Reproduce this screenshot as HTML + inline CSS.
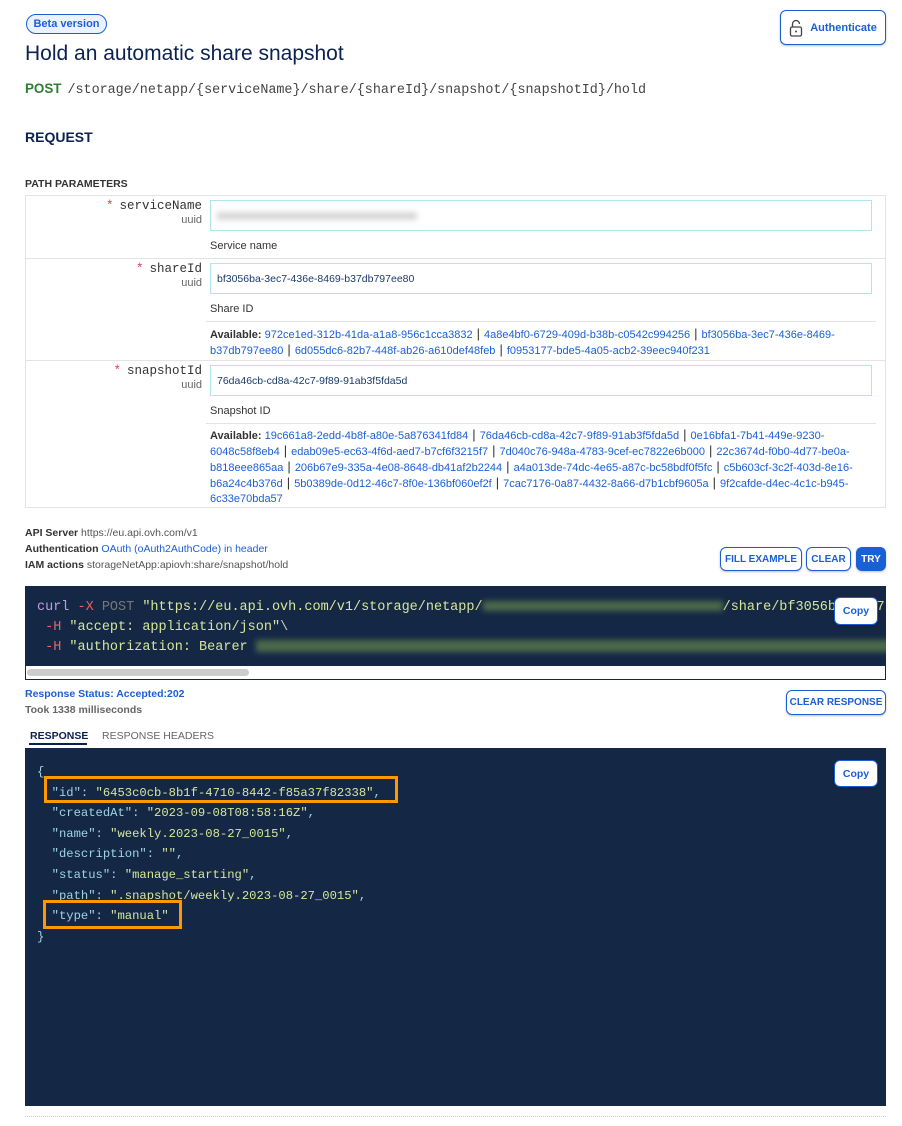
<!DOCTYPE html>
<html><head><meta charset="utf-8"><style>
*{box-sizing:border-box;margin:0;padding:0}
body{width:902px;height:1126px;background:#fff;font-family:"Liberation Sans",sans-serif;color:#333;position:relative;overflow:hidden}
.a{position:absolute;white-space:nowrap}
.mono{font-family:"Liberation Mono",monospace}
.btn{position:absolute;border:1.5px solid #1a5fd6;border-radius:6px;color:#1a5fd6;font-weight:bold;font-size:10.5px;display:flex;align-items:center;justify-content:center;background:#fff;box-shadow:0 1px 2px rgba(0,0,0,.25);white-space:nowrap}
.lnk{color:#1a5fd6}
.inp{position:absolute;left:210px;width:662px;height:31px;border:1px solid #aee6f0;font-size:10.5px;color:#1b3a6b;padding:9px 6px}
.lbl{position:absolute;font-size:11px;color:#333}
.pn{position:absolute;right:700px;text-align:right;font-family:"Liberation Mono",monospace;font-size:12.5px;color:#333}
.pn b{color:#e8384f;font-weight:normal;margin-right:6px}
.pn i{display:block;font-style:normal;font-size:11px;font-family:"Liberation Sans",sans-serif;color:#666;margin-top:1px}
.av{position:absolute;left:210px;width:665px;font-size:11px;line-height:15px;color:#1a5fd6;white-space:normal}
.av b{color:#333}
.av s{text-decoration:none;color:#333;padding:0 4px;font-size:13px;line-height:13px}
.blur{display:inline-block;background:#5a7a4a;filter:blur(3px);opacity:.8;vertical-align:middle}
.code{position:absolute;background:#142846;}
.k{color:#9fd3e3}.v{color:#d6e69a}
</style></head><body>
<div class="a" style="left:26px;top:14px;height:20px;width:81px;border:1.5px solid #1a5fd6;border-radius:10px;background:#eaf2ff;color:#1a5fd6;font-weight:bold;font-size:11px;display:flex;align-items:center;justify-content:center">Beta version</div>
<div class="btn" style="left:780px;top:10px;width:106px;height:35px;font-size:11px"><svg width="14" height="18" viewBox="0 0 14 18" style="margin-right:7px"><path d="M3.5 8V5a3.5 3.5 0 0 1 7 0" fill="none" stroke="#444" stroke-width="1.3"/><rect x="1.5" y="8" width="11" height="9" rx="1.5" fill="none" stroke="#444" stroke-width="1.3"/><circle cx="7" cy="12.5" r="1" fill="#444"/></svg>Authenticate</div>
<div class="a" style="left:25px;top:42px;font-size:21px;color:#0b2250">Hold an automatic share snapshot</div>
<div class="a" style="left:25px;top:81px;font-size:13.4px"><b style="color:#2e7d32;font-family:'Liberation Sans';margin-right:6px">POST</b><span class="mono" style="color:#444">/storage/netapp/{serviceName}/share/{shareId}/snapshot/{snapshotId}/hold</span></div>
<div class="a" style="left:25px;top:129px;font-size:14px;font-weight:bold;color:#0b2250">REQUEST</div>
<div class="a" style="left:25px;top:178px;font-size:10.5px;font-weight:bold;color:#333">PATH PARAMETERS</div>
<div class="a" style="left:25px;top:195px;width:861px;height:313px;border:1px solid #e3e3e3"></div>
<div class="a" style="left:25px;top:258px;width:861px;border-top:1px solid #e3e3e3"></div>
<div class="a" style="left:25px;top:360px;width:861px;border-top:1px solid #e3e3e3"></div>
<div class="pn" style="top:199px">
<b>*</b>serviceName<i>uuid</i></div>
<div class="inp" style="top:200px"><span class="blur" style="width:200px;height:8px;background:#ccc"></span></div>
<div class="lbl" style="left:210px;top:240px">Service name</div>
<div class="pn" style="top:262px"><b>*</b>shareId<i>uuid</i></div>
<div class="inp" style="top:263px">bf3056ba-3ec7-436e-8469-b37db797ee80</div>
<div class="lbl" style="left:210px;top:303px">Share ID</div>
<div class="a" style="left:206px;top:321px;width:670px;border-top:1px solid #e3e3e3"></div>
<div class="av" style="top:327px"><b>Available:</b> 972ce1ed-312b-41da-a1a8-956c1cca3832<s>|</s>4a8e4bf0-6729-409d-b38b-c0542c994256<s>|</s>bf3056ba-3ec7-436e-8469-b37db797ee80<s>|</s>6d055dc6-82b7-448f-ab26-a610def48feb<s>|</s>f0953177-bde5-4a05-acb2-39eec940f231</div>
<div class="pn" style="top:364px"><b>*</b>snapshotId<i>uuid</i></div>
<div class="inp" style="top:365px">76da46cb-cd8a-42c7-9f89-91ab3f5fda5d</div>
<div class="lbl" style="left:210px;top:405px">Snapshot ID</div>
<div class="a" style="left:206px;top:423px;width:670px;border-top:1px solid #e3e3e3"></div>
<div class="av" style="top:428px"><b>Available:</b> 19c661a8-2edd-4b8f-a80e-5a876341fd84<s>|</s>76da46cb-cd8a-42c7-9f89-91ab3f5fda5d<s>|</s>0e16bfa1-7b41-449e-9230-6048c58f8eb4<s>|</s>edab09e5-ec63-4f6d-aed7-b7cf6f3215f7<s>|</s>7d040c76-948a-4783-9cef-ec7822e6b000<s>|</s>22c3674d-f0b0-4d77-be0a-b818eee865aa<s>|</s>206b67e9-335a-4e08-8648-db41af2b2244<s>|</s>a4a013de-74dc-4e65-a87c-bc58bdf0f5fc<s>|</s>c5b603cf-3c2f-403d-8e16-b6a24c4b376d<s>|</s>5b0389de-0d12-46c7-8f0e-136bf060ef2f<s>|</s>7cac7176-0a87-4432-8a66-d7b1cbf9605a<s>|</s>9f2cafde-d4ec-4c1c-b945-6c33e70bda57</div>

<div class="a" style="left:25px;top:525px;font-size:10.5px;line-height:16px;color:#555"><b style="color:#333">API Server</b> https://eu.api.ovh.com/v1<br><b style="color:#333">Authentication</b> <span class="lnk">OAuth (oAuth2AuthCode) in header</span><br><b style="color:#333">IAM actions</b> storageNetApp:apiovh:share/snapshot/hold</div>
<div class="btn" style="left:720px;top:547px;width:82px;height:24px;font-size:10px">FILL EXAMPLE</div>
<div class="btn" style="left:806px;top:547px;width:45px;height:24px;font-size:10px">CLEAR</div>
<div class="btn" style="left:856px;top:547px;width:30px;height:24px;background:#1a5fd6;color:#fff;font-size:10px">TRY</div>

<div class="code" style="left:25px;top:586px;width:861px;height:94px;overflow:hidden">
<div class="a mono" style="left:12px;top:12px;font-size:13.5px;line-height:20px;color:#d6e69a">
<span style="color:#c39ae0">curl</span> <span style="color:#e8626a">-X</span> <span style="color:#777">POST</span> "https://eu.api.ovh.com/v1/storage/netapp/<span class="blur" style="width:240px;height:10px"></span>/share/bf3056ba-3ec7-436e-8469<br>
&nbsp;<span style="color:#e8626a">-H</span> "accept: application/json"<span style="color:#ccc">\</span><br>
&nbsp;<span style="color:#e8626a">-H</span> "authorization: Bearer <span class="blur" style="width:640px;height:12px"></span></div>
<div class="btn" style="left:809px;top:11px;width:44px;height:28px">Copy</div>
<div class="a" style="left:0;top:80px;width:861px;height:14px;background:#fff;border:1px solid #142846;border-top:none"></div>
<div class="a" style="left:2px;top:83px;width:222px;height:7px;background:#ccc;border-radius:4px"></div>
</div>

<div class="a" style="left:25px;top:688px;font-size:10.5px;font-weight:bold;color:#1a5fd6">Response Status: Accepted:202</div>
<div class="a" style="left:25px;top:704px;font-size:10.5px;font-weight:bold;color:#666">Took 1338 milliseconds</div>
<div class="btn" style="left:786px;top:690px;width:100px;height:25px;font-size:10px">CLEAR RESPONSE</div>
<div class="a" style="left:30px;top:730px;font-size:10.5px;font-weight:bold;color:#0b2250">RESPONSE</div>
<div class="a" style="left:29px;top:743px;width:58px;height:2px;background:#0b2250"></div>
<div class="a" style="left:102px;top:730px;font-size:10.5px;color:#666">RESPONSE HEADERS</div>

<div class="code" style="left:25px;top:748px;width:861px;height:358px">
<div class="a mono" style="left:12px;top:14px;font-size:12.2px;line-height:20.6px;color:#9fd3e3">
{<br>
&nbsp;&nbsp;<span class="k">"id"</span>: <span class="v">"6453c0cb-8b1f-4710-8442-f85a37f82338"</span>,<br>
&nbsp;&nbsp;<span class="k">"createdAt"</span>: <span class="v">"2023-09-08T08:58:16Z"</span>,<br>
&nbsp;&nbsp;<span class="k">"name"</span>: <span class="v">"weekly.2023-08-27_0015"</span>,<br>
&nbsp;&nbsp;<span class="k">"description"</span>: <span class="v">""</span>,<br>
&nbsp;&nbsp;<span class="k">"status"</span>: <span class="v">"manage_starting"</span>,<br>
&nbsp;&nbsp;<span class="k">"path"</span>: <span class="v">".snapshot/weekly.2023-08-27_0015"</span>,<br>
&nbsp;&nbsp;<span class="k">"type"</span>: <span class="v">"manual"</span><br>
}</div>
<div class="a" style="left:19px;top:28px;width:354px;height:27px;border:3.5px solid #ff9800"></div>
<div class="a" style="left:18px;top:152px;width:139px;height:29px;border:3.5px solid #ff9800"></div>
<div class="btn" style="left:809px;top:12px;width:44px;height:27px">Copy</div>
</div>
<div class="a" style="left:25px;top:1116px;width:861px;border-top:1px dotted #ccc"></div>
</body></html>
